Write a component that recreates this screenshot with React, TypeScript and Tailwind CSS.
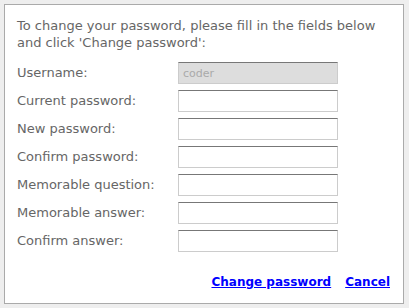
const FIELDS = [
  { label: 'Username:', value: 'coder', disabled: true },
  { label: 'Current password:' },
  { label: 'New password:' },
  { label: 'Confirm password:' },
  { label: 'Memorable question:' },
  { label: 'Memorable answer:' },
  { label: 'Confirm answer:' },
]

export default function App() {
  return (
    <div className="w-[409px] h-[308px] bg-[#eeeeee] pt-[4px] pl-[4px] font-['DejaVu_Sans',Verdana,sans-serif]">
      <div className="w-[400px] h-[300px] bg-white border border-[#aaaaaa] flex flex-col px-[12px] pt-[12px]">
        {/* intro */}
        <p className="text-[13px] leading-[17px] text-[#666666] whitespace-nowrap">
          To change your password, please fill in the fields below
          <br />
          and click 'Change password':
        </p>

        {/* fields */}
        <div className="mt-[11px] flex flex-col gap-[6px]">
          {FIELDS.map(f => (
            <div key={f.label} className="flex items-center">
              <label className="w-[161px] text-[13px] text-[#666666]">{f.label}</label>
              <input
                type="text"
                defaultValue={f.value}
                disabled={f.disabled}
                className={`w-[160px] h-[22px] border border-[#cccccc] border-t-[#777777] px-[4px] text-[11px] outline-none ${
                  f.disabled ? 'bg-[#dddddd] text-[#aaaaaa]' : 'bg-white text-[#333333]'
                }`}
              />
            </div>
          ))}
        </div>

        {/* actions */}
        <div className="mt-[21px] flex justify-end gap-[14px] pr-[1px]">
          <a href="#" className="text-[12px] font-bold text-[#0000ff] underline">Change password</a>
          <a href="#" className="text-[12px] font-bold text-[#0000ff] underline">Cancel</a>
        </div>
      </div>
    </div>
  )
}
